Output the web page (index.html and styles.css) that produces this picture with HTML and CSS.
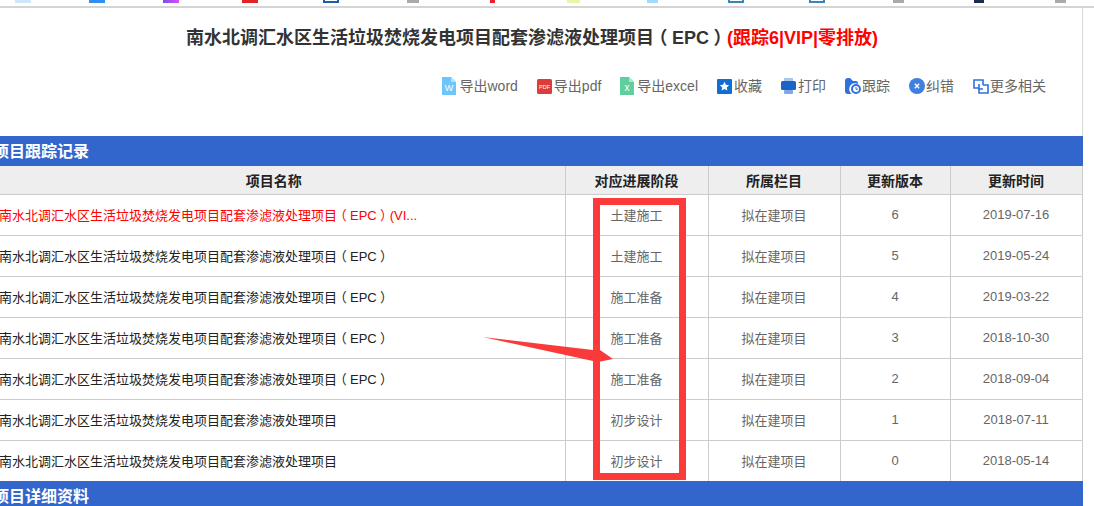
FILE: index.html
```html
<!DOCTYPE html>
<html lang="zh-CN">
<head>
<meta charset="utf-8">
<title>项目跟踪记录</title>
<link rel="stylesheet" href="styles.css">
</head>
<body>
<div class="tabs">
  <span class="fav f1"></span><span class="fav f2"></span><span class="fav f3"></span><span class="fav f4"></span><span class="fav f5"></span><span class="fav f6"></span><span class="fav f7"></span><span class="fav f8"></span><span class="fav f9"></span><span class="fav f10"></span><span class="fav f11"></span><span class="fav f12"></span><span class="fav f13"></span><span class="fav f14"></span>
</div>
<main class="page">
  <h1 class="title">南水北调汇水区生活垃圾焚烧发电项目配套渗滤液处理项目<span class="fw">（</span>EPC<span class="fw">）</span><span class="hot">(跟踪6|VIP|零排放)</span></h1>
  <nav class="tools">
    <a class="tool"><svg width="14" height="18" viewBox="0 0 14 18"><path d="M0 0h9l5 5v13H0z" fill="#6cc5fb"/><path d="M9 0l5 5H9z" fill="#b5e3fd"/><text x="7" y="14" font-size="9" fill="#fff" text-anchor="middle" font-family="Liberation Sans">W</text></svg>导出word</a>
    <a class="tool"><svg width="15" height="15" viewBox="0 0 15 15"><rect width="15" height="15" rx="1.500" fill="#de3b3b"/><text x="7.500" y="10" font-size="5.500" fill="#fff" text-anchor="middle" font-family="Liberation Sans">PDF</text></svg>导出pdf</a>
    <a class="tool"><svg width="14" height="18" viewBox="0 0 14 18"><path d="M0 0h9l5 5v13H0z" fill="#5ecf9d"/><path d="M9 0l5 5H9z" fill="#a9e8cb"/><text x="7" y="14" font-size="10" fill="#fff" text-anchor="middle" font-family="Liberation Sans">x</text></svg>导出excel</a>
    <a class="tool"><svg width="15" height="15" viewBox="0 0 15 15"><rect width="15" height="15" rx="1" fill="#0f6fd6"/><path d="M7.500 2.800l1.400 3 3.200.4-2.400 2.200.7 3.200-2.900-1.600-2.900 1.600.7-3.200-2.400-2.200 3.200-.4z" fill="#fff"/></svg>收藏</a>
    <a class="tool"><svg width="15" height="16" viewBox="0 0 15 16"><rect x="3" y="0" width="9" height="3" fill="#a9c6ee"/><rect x="0" y="3" width="15" height="9" rx="1.500" fill="#1a64c8"/><rect x="3" y="12" width="9" height="4" rx="1" fill="#7fa9e6"/></svg>打印</a>
    <a class="tool"><svg width="16" height="16" viewBox="0 0 16 16"><path d="M0 3q0-3 3-3h2l3 3h3q2 0 2 2v1A5.500 5.500 0 0 0 7 16H3q-3 0-3-3z" fill="#2f72dc"/><circle cx="11" cy="11" r="4" fill="#fff" stroke="#2f72dc" stroke-width="2"/><path d="M11 9v2.200h2" fill="none" stroke="#2f72dc" stroke-width="1"/></svg>跟踪</a>
    <a class="tool"><svg width="16" height="16" viewBox="0 0 16 16"><circle cx="8" cy="8" r="8" fill="#3f7fe0"/><path d="M5.800 5.800l4.400 4.400m0-4.400l-4.400 4.400" stroke="#fff" stroke-width="1.400"/></svg>纠错</a>
    <a class="tool"><svg width="16" height="15" viewBox="0 0 16 15"><path d="M6 9H1V1h9v5" fill="none" stroke="#2f72dc" stroke-width="1.600"/><path d="M10 6h5v8H6V9" fill="none" stroke="#2f72dc" stroke-width="1.600"/><path d="M6 5v5h4" fill="none" stroke="#2f72dc" stroke-width="1.600"/></svg>更多相关</a>
  </nav>
  <h2 class="section">项目跟踪记录</h2>
  <table class="records">
    <colgroup><col class="c1"><col class="c2"><col class="c3"><col class="c4"><col class="c5"></colgroup>
    <thead><tr><th>项目名称</th><th>对应进展阶段</th><th>所属栏目</th><th>更新版本</th><th>更新时间</th></tr></thead>
    <tbody>
      <tr><td class="name red"><span class="clip">南水北调汇水区生活垃圾焚烧发电项目配套渗滤液处理项目<span class="fw">（</span>EPC<span class="fw">）</span>(VI...</span></td><td>土建施工</td><td>拟在建项目</td><td>6</td><td>2019-07-16</td></tr>
      <tr><td class="name">南水北调汇水区生活垃圾焚烧发电项目配套渗滤液处理项目<span class="fw">（</span>EPC<span class="fw">）</span></td><td>土建施工</td><td>拟在建项目</td><td>5</td><td>2019-05-24</td></tr>
      <tr><td class="name">南水北调汇水区生活垃圾焚烧发电项目配套渗滤液处理项目<span class="fw">（</span>EPC<span class="fw">）</span></td><td>施工准备</td><td>拟在建项目</td><td>4</td><td>2019-03-22</td></tr>
      <tr><td class="name">南水北调汇水区生活垃圾焚烧发电项目配套渗滤液处理项目<span class="fw">（</span>EPC<span class="fw">）</span></td><td>施工准备</td><td>拟在建项目</td><td>3</td><td>2018-10-30</td></tr>
      <tr><td class="name">南水北调汇水区生活垃圾焚烧发电项目配套渗滤液处理项目<span class="fw">（</span>EPC<span class="fw">）</span></td><td>施工准备</td><td>拟在建项目</td><td>2</td><td>2018-09-04</td></tr>
      <tr><td class="name">南水北调汇水区生活垃圾焚烧发电项目配套渗滤液处理项目</td><td>初步设计</td><td>拟在建项目</td><td>1</td><td>2018-07-11</td></tr>
      <tr><td class="name">南水北调汇水区生活垃圾焚烧发电项目配套渗滤液处理项目</td><td>初步设计</td><td>拟在建项目</td><td>0</td><td>2018-05-14</td></tr>
    </tbody>
  </table>
  <h2 class="section">项目详细资料</h2>
  <div class="redbox"></div>
  <svg class="arrow" width="135" height="30" viewBox="0 0 135 30"><path d="M0 0L110 13L117 13L130 22L110 26L110 24Z" fill="#f83a3a"/></svg>
</main>
</body>
</html>
```
FILE: styles.css
```css
* { box-sizing: border-box; }
html, body { margin: 0; padding: 0; height: 506px; overflow: hidden; background: #fff; }
body { font-family: "Liberation Sans", "Noto Sans CJK SC", sans-serif; color: #666; }
.tabs { height: 8px; border-bottom: 2px solid #d4d4d4; display: flex; padding-left: 15px; }
.fav { display: block; height: 3px; width: 16px; margin-right: 58px; background: #aaa; flex: none; }
.f1 { background: #cfe6fb; }
.f2 { background: #2f8ff0; }
.f3 { background: linear-gradient(90deg, #7a4df0, #e04df0); margin-right: 63px; }
.f4 { background: #e52222; margin-right: 65px; }
.f5 { background: #fff; border: solid #1c5fa8; border-width: 0 2px 2px; margin-right: 68px; }
.f6 { width: 12px; margin-right: 71px; }
.f7 { width: 5px; margin-right: 72px; background: #ee1c2e; }
.f8 { width: 13px; margin-right: 67px; background: #e6f7a8; }
.f9 { width: 11px; margin-right: 70px; background: #9fdcff; }
.f10, .f11 { background: #fff; border: solid #3a85b8; border-width: 0 2px 2px; margin-right: 65px; }
.f11 { margin-right: 68px; }
.f12 { width: 11px; margin-right: 70px; }
.f13 { width: 10px; margin-right: 71px; background: #1c2c50; }
.f14 { width: 11px; }
.page { position: relative; width: 1083px; height: 498px; overflow: hidden; }
.title { margin: 0; padding: 20px 18px 0 0; height: 56px; border-right: 1px solid #d8d8d8; text-align: center; font-size: 18px; line-height: 20px; font-weight: bold; color: #333; white-space: nowrap; }
.hot { color: #f00; }
.fw { display: inline-block; width: 1em; text-align: center; font-feature-settings: "halt"; }
.tools { display: flex; justify-content: flex-end; align-items: center; height: 72px; padding-bottom: 28px; padding-right: 36px; gap: 19px; border-right: 1px solid #d8d8d8; }
.tool { display: grid; grid-template-columns: 17px auto; align-items: center; font-size: 14px; color: #666; line-height: 20px; white-space: nowrap; }
.section { margin: 0 0 0 -7px; height: 30px; line-height: 32px; background: #3366cc; color: #fff; font-size: 16px; font-weight: bold; width: 1090px; }
.records { border-collapse: collapse; table-layout: fixed; width: 1089px; margin-left: -7px; font-size: 13px; }
.c1 { width: 572px; } .c2 { width: 143px; } .c3 { width: 132px; } .c4 { width: 110px; } .c5 { width: 132px; }
.records th { height: 28px; background: #eee; color: #222; font-size: 14px; font-weight: bold; border: 1px solid #ccc; border-width: 0 1px 1px 0; padding: 0; text-align: center; }
.records th:first-child { padding-right: 10px; }
.records td { height: 41px; border: 1px solid #ccc; border-width: 0 1px 1px 0; text-align: center; padding: 0; color: #666; }
.records tr:last-child td { border-bottom: 0; }
.records .name { text-align: left; color: #222; padding-left: 6px; white-space: nowrap; }
.records .red { color: #f00; }
.clip { display: block; width: 426px; overflow: hidden; white-space: nowrap; }
.redbox { position: absolute; left: 593px; top: 190px; width: 93px; height: 282px; border: 7px solid #fb3a3a; }
.arrow { position: absolute; left: 483px; top: 329px; }
```
